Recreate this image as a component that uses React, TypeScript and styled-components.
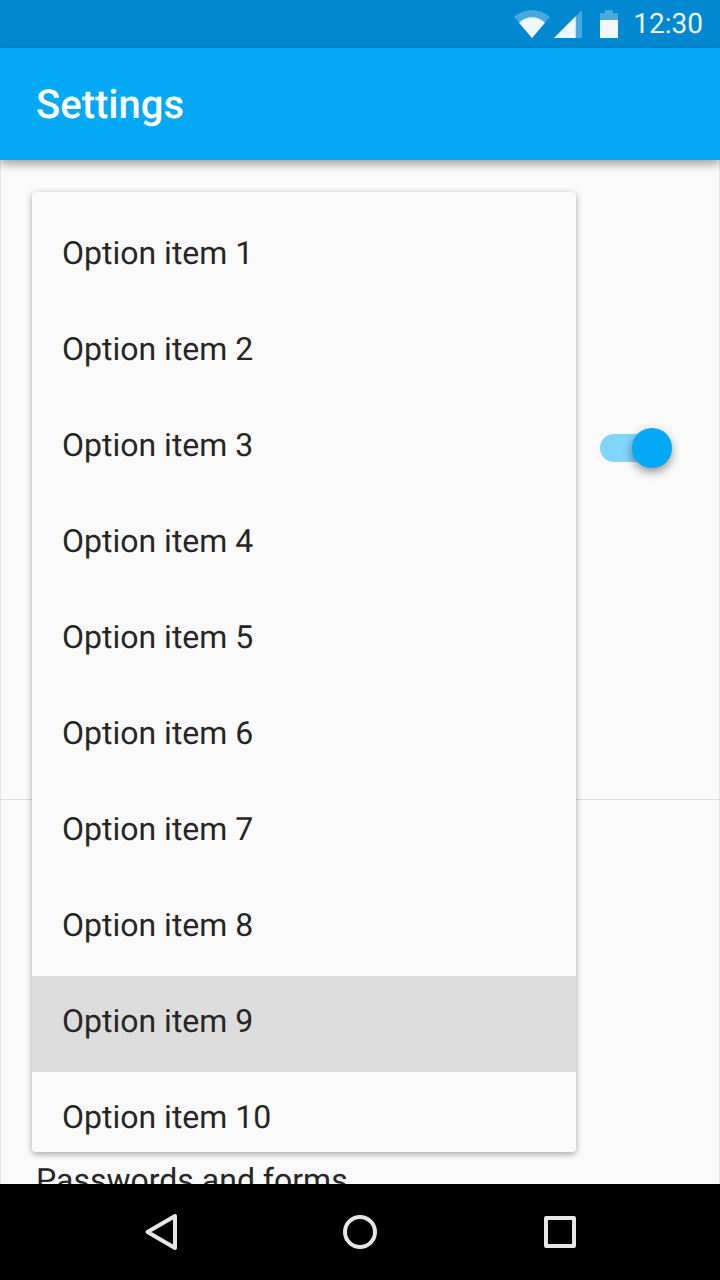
import React from "react";
import styled, { createGlobalStyle } from "styled-components";

const GlobalStyle = createGlobalStyle`
  html, body {
    margin: 0;
    padding: 0;
    background: #fafafa;
  }
  body {
    font-family: Roboto, "Liberation Sans", sans-serif;
    text-rendering: geometricPrecision;
  }
`;

const Screen = styled.div`
  width: 720px;
  height: 1280px;
  display: flex;
  flex-direction: column;
  overflow: hidden;
`;

const StatusBar = styled.div`
  height: 48px;
  flex: none;
  background: #0288d1;
  display: flex;
  align-items: center;
  justify-content: flex-end;
  padding-right: 17px;
  color: #e8f4fb;
`;

const StatusIcons = styled.svg`
  display: block;
  margin-right: 15px;
`;

const Clock = styled.span`
  font-size: 28px;
  font-weight: 400;
  line-height: 48px;
`;

const AppBar = styled.header`
  height: 112px;
  flex: none;
  background: #03a9f4;
  display: flex;
  align-items: center;
  padding-left: 36px;
  box-shadow: 0 4px 9px rgba(0, 0, 0, 0.36);
  position: relative;
  z-index: 2;
`;

const Title = styled.h1`
  margin: 0;
  color: #fff;
  font-size: 40px;
  font-weight: 500;
`;

const Content = styled.main`
  flex: 1;
  min-height: 0;
  position: relative;
  overflow: hidden;
  background: #fafafa;
  border-left: 1px solid #e4e4e4;
  border-right: 1px solid #e4e4e4;
`;

const SwitchSection = styled.section`
  height: 640px;
  box-sizing: border-box;
  border-bottom: 1px solid #dcdcdc;
  display: flex;
  justify-content: flex-end;
  padding: 268px 47px 0 0;
`;

const Toggle = styled.div`
  width: 72px;
  height: 40px;
  position: relative;
`;

const ToggleTrack = styled.div`
  position: absolute;
  left: 0;
  right: 12px;
  top: 6px;
  height: 28px;
  border-radius: 14px;
  background: #81d4fa;
`;

const ToggleThumb = styled.div`
  position: absolute;
  right: 0;
  top: 0;
  width: 40px;
  height: 40px;
  border-radius: 50%;
  background: #03a9f4;
  box-shadow: 0 4px 10px rgba(0, 0, 0, 0.42);
`;

const FormSection = styled.section`
  padding: 360px 0 0 35px;
`;

const RowLabel = styled.div`
  font-size: 32px;
  line-height: 40px;
  color: #262626;
`;

const Menu = styled.ul`
  position: absolute;
  left: 31px;
  top: 32px;
  width: 544px;
  height: 960px;
  margin: 0;
  padding: 16px 0 0;
  box-sizing: border-box;
  list-style: none;
  overflow: hidden;
  background: #fafafa;
  border-radius: 4px;
  box-shadow: 0 2px 6px rgba(0, 0, 0, 0.35);
`;

const MenuItem = styled.li<{ $selected?: boolean }>`
  height: 96px;
  box-sizing: border-box;
  display: flex;
  align-items: center;
  padding: 0 0 6px 30px;
  font-size: 32px;
  color: #262626;
  background: ${(p) => (p.$selected ? "#dcdcdc" : "transparent")};
`;

const NavBar = styled.nav`
  height: 96px;
  flex: none;
  background: #000;
  display: grid;
  grid-template-columns: 48px 48px 48px;
  justify-content: center;
  column-gap: 152px;
  align-items: center;
  justify-items: center;
  color: #e6e6e6;
`;

const options = Array.from({ length: 10 }, (_, i) => i + 1);

const App = () => {
  return (
    <Screen>
      <GlobalStyle />
      <StatusBar>
        <StatusIcons width="104" height="36" viewBox="0 0 104 36">
          <path d="M0 10.700Q18 -2.700 36 10.700L18 32Z" fill="#e8f4fb" fillOpacity="0.3" />
          <path d="M5 16.700Q18 5.900 31 16.700L18 32Z" fill="#f0f8fd" />
          <path d="M40 32L68 4V32Z" fill="#e8f4fb" fillOpacity="0.3" />
          <path d="M40 32L61.700 10.300V32Z" fill="#f0f8fd" />
          <path d="M86 7h5V4h8v3h5v25H86Z" fill="#e8f4fb" fillOpacity="0.3" />
          <path d="M86 14h18V32H86Z" fill="#f0f8fd" />
        </StatusIcons>
        <Clock>12:30</Clock>
      </StatusBar>
      <AppBar>
        <Title>Settings</Title>
      </AppBar>
      <Content>
        <SwitchSection>
          <Toggle>
            <ToggleTrack />
            <ToggleThumb />
          </Toggle>
        </SwitchSection>
        <FormSection>
          <RowLabel>Passwords and forms</RowLabel>
        </FormSection>
        <Menu>
          {options.map((n) => (
            <MenuItem key={n} $selected={n === 9}>
              Option item {n}
            </MenuItem>
          ))}
        </Menu>
      </Content>
      <NavBar>
        <svg width="48" height="48" viewBox="0 0 48 48" fill="none" stroke="currentColor" strokeWidth="4" strokeLinejoin="round">
          <path d="M39 8V40L11.500 24Z" />
        </svg>
        <svg width="48" height="48" viewBox="0 0 48 48" fill="none" stroke="currentColor" strokeWidth="4">
          <circle cx="24" cy="24" r="15" />
        </svg>
        <svg width="48" height="48" viewBox="0 0 48 48" fill="none" stroke="currentColor" strokeWidth="4" strokeLinejoin="round">
          <rect x="10" y="10" width="28" height="28" />
        </svg>
      </NavBar>
    </Screen>
  );
};

export default App;
